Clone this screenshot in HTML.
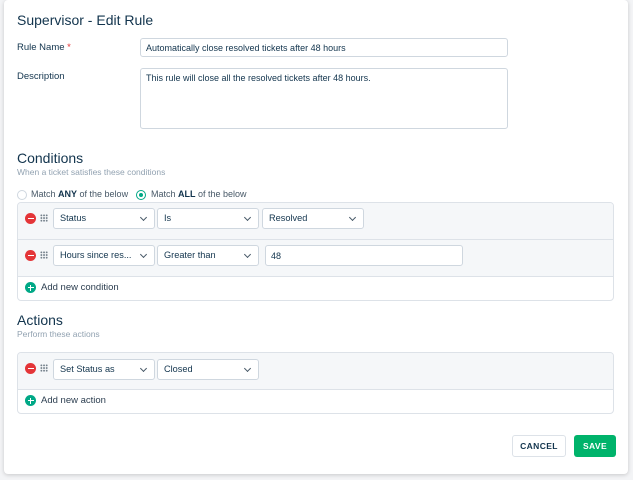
<!DOCTYPE html><html><head><style>
*{box-sizing:border-box;margin:0;padding:0}
body{width:633px;height:480px;background:#f3f4f6;font-family:"Liberation Sans",sans-serif;color:#12344d;position:relative;overflow:hidden}
.card{position:absolute;left:4px;top:0;width:624px;height:474px;background:#fff;border-radius:4px;box-shadow:0 1px 4px rgba(0,0,0,.18)}
.a{position:absolute;white-space:nowrap}
.lbl{font-size:9.5px;color:#12344d}
.inp{position:absolute;border:1px solid #cfd7df;border-radius:3px;background:#fff;font-size:9px;padding:4px 5px;color:#12344d}
.sel{position:absolute;height:21px;border:1px solid #cfd7df;border-radius:3px;background:#fff;font-size:9.2px;padding:4px 6px;color:#12344d}
.sel:after{content:"";position:absolute;right:8px;top:6px;width:4px;height:4px;border-right:1.3px solid #475867;border-bottom:1.3px solid #475867;transform:rotate(45deg)}
.box{position:absolute;left:17px;width:597px;border:1px solid #dde2e8;border-radius:4px;overflow:hidden}
.row{position:absolute;left:0;width:100%;background:#f5f7f9;border-bottom:1px solid #dde2e8}
.minus{position:absolute;width:11px;height:11px;border-radius:50%;background:#e43538}
.minus:after{content:"";position:absolute;left:2.5px;top:4.8px;width:6px;height:1.5px;background:#fff}
.plus{position:absolute;width:11px;height:11px;border-radius:50%;background:#00a886}
.plus:before{content:"";position:absolute;left:2.5px;top:4.8px;width:6px;height:1.5px;background:#fff}
.plus:after{content:"";position:absolute;left:4.8px;top:2.5px;width:1.5px;height:6px;background:#fff}
.grip{position:absolute;width:8px;height:8px;background-image:radial-gradient(circle,#6f7c87 0.8px,transparent 1px);background-size:2.7px 2.7px}
h2{font-weight:normal;font-size:14px;color:#12344d}
.sub{font-size:8.5px;color:#92a2b1}
</style></head><body>
<div class="card"></div>
<div class="a" style="left:17px;top:12px;font-size:14px">Supervisor - Edit Rule</div>
<div class="a lbl" style="left:17px;top:42px">Rule Name <span style="color:#e43538">*</span></div>
<div class="inp" style="left:140px;top:38px;width:368px;height:19px">Automatically close resolved tickets after 48 hours</div>
<div class="a lbl" style="left:17px;top:71px">Description</div>
<div class="inp" style="left:140px;top:68px;width:368px;height:61px">This rule will close all the resolved tickets after 48 hours.</div>
<h2 class="a" style="left:17px;top:150px">Conditions</h2>
<div class="a sub" style="left:17px;top:167px">When a ticket satisfies these conditions</div>
<div class="a" style="left:17px;top:190px;width:10px;height:10px;border:1px solid #cfd7df;border-radius:50%"></div>
<div class="a" style="left:31px;top:189px;font-size:9px;color:#475867">Match <b style="color:#12344d">ANY</b> of the below</div>
<div class="a" style="left:136px;top:190px;width:10px;height:10px;border:1px solid #00a886;border-radius:50%"><div style="position:absolute;left:2px;top:2px;width:4px;height:4px;border-radius:50%;background:#00a886"></div></div>
<div class="a" style="left:151px;top:189px;font-size:9px;color:#475867">Match <b style="color:#12344d">ALL</b> of the below</div>
<div class="box" style="top:202px;height:99px">
 <div class="row" style="top:0;height:37px"></div>
 <div class="row" style="top:37px;height:37px"></div>
</div>
<div class="minus" style="left:25px;top:213px"></div><div class="grip" style="left:40px;top:214px"></div>
<div class="sel" style="left:53px;top:208px;width:102px">Status</div>
<div class="sel" style="left:157px;top:208px;width:102px">Is</div>
<div class="sel" style="left:262px;top:208px;width:102px">Resolved</div>
<div class="minus" style="left:25px;top:250px"></div><div class="grip" style="left:40px;top:251px"></div>
<div class="sel" style="left:53px;top:245px;width:102px">Hours since res...</div>
<div class="sel" style="left:157px;top:245px;width:102px">Greater than</div>
<div class="inp" style="left:265px;top:245px;width:198px;height:21px;padding-top:5px">48</div>
<div class="plus" style="left:25px;top:282px"></div>
<div class="a lbl" style="left:41px;top:282px;color:#2c3e50">Add new condition</div>
<h2 class="a" style="left:17px;top:312px">Actions</h2>
<div class="a sub" style="left:17px;top:329px">Perform these actions</div>
<div class="box" style="top:352px;height:62px"><div class="row" style="top:0;height:37px"></div></div>
<div class="minus" style="left:25px;top:363px"></div><div class="grip" style="left:40px;top:364px"></div>
<div class="sel" style="left:53px;top:359px;width:102px">Set Status as</div>
<div class="sel" style="left:157px;top:359px;width:102px">Closed</div>
<div class="plus" style="left:25px;top:395px"></div>
<div class="a lbl" style="left:41px;top:395px;color:#2c3e50">Add new action</div>
<div class="a" style="left:512px;top:435px;width:54px;height:22px;border:1px solid #dde2e8;border-radius:3px;font-size:8.5px;font-weight:bold;text-align:center;line-height:20px;letter-spacing:.4px;color:#12344d">CANCEL</div>
<div class="a" style="left:574px;top:435px;width:42px;height:22px;background:#00b36b;border-radius:3px;font-size:8.5px;font-weight:bold;text-align:center;line-height:22px;letter-spacing:.4px;color:#fff">SAVE</div>
</body></html>
